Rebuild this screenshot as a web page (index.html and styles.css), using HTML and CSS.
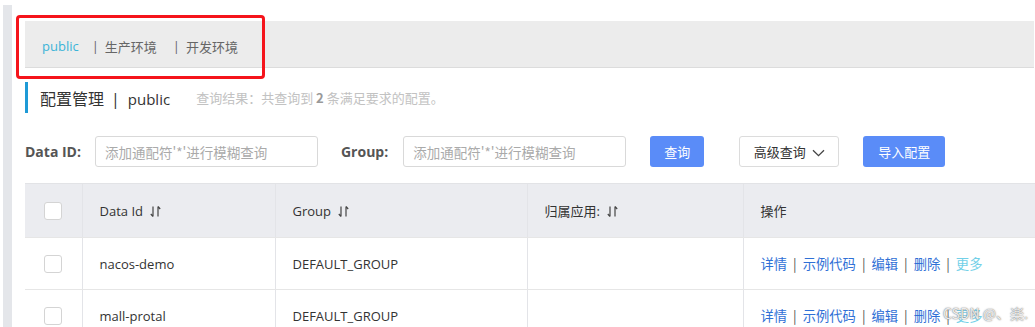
FILE: index.html
```html
<!DOCTYPE html>
<html lang="zh-CN">
<head>
    <meta charset="UTF-8">
    <title>配置管理</title>
    <link rel="stylesheet" href="styles.css">
</head>
<body>
    <div class="page">
        <div class="side-strip"></div>

        <div class="main">
            <!-- 命名空间切换 -->
            <div class="ns-bar">
                <span class="ns-item active">public</span>
                <span class="ns-sep">|</span>
                <span class="ns-item">生产环境</span>
                <span class="ns-sep">|</span>
                <span class="ns-item">开发环境</span>
            </div>
            <div class="mark-box"></div>

            <!-- 标题 -->
            <div class="page-title">
                <span class="title-text">配置管理<span class="title-sep">|</span><span class="title-ns">public</span></span>
                <span class="title-tip">查询结果：共查询到 <b>2</b> 条满足要求的配置。</span>
            </div>

            <!-- 查询条件 -->
            <div class="search-row">
                <label class="search-label">Data ID:</label>
                <input class="search-input" type="text" placeholder="添加通配符'*'进行模糊查询">
                <label class="search-label group-label">Group:</label>
                <input class="search-input" type="text" placeholder="添加通配符'*'进行模糊查询">
                <button class="btn btn-primary btn-query">查询</button>
                <button class="btn btn-normal">高级查询
                    <svg class="chevron" width="13" height="8" viewBox="0 0 13 8"><path d="M1 1.2 L6.5 6.6 L12 1.2" fill="none" stroke="#444" stroke-width="1.3"/></svg>
                </button>
                <button class="btn btn-primary btn-import">导入配置</button>
            </div>

            <!-- 配置列表 -->
            <table class="config-table">
                <colgroup>
                    <col style="width: 57px">
                    <col style="width: 193px">
                    <col style="width: 252px">
                    <col style="width: 216px">
                    <col>
                </colgroup>
                <thead>
                    <tr>
                        <th><span class="checkbox"></span></th>
                        <th>Data Id <svg class="sort" width="11" height="13" viewBox="0 0 11 13"><path d="M3 1.5 V11.5 M0.8 9 L3 11.5 M8 1.5 V11.5 M8 1.5 L10.2 4" fill="none" stroke="#444" stroke-width="1.2"/></svg></th>
                        <th>Group <svg class="sort" width="11" height="13" viewBox="0 0 11 13"><path d="M3 1.5 V11.5 M0.8 9 L3 11.5 M8 1.5 V11.5 M8 1.5 L10.2 4" fill="none" stroke="#444" stroke-width="1.2"/></svg></th>
                        <th>归属应用: <svg class="sort" width="11" height="13" viewBox="0 0 11 13"><path d="M3 1.5 V11.5 M0.8 9 L3 11.5 M8 1.5 V11.5 M8 1.5 L10.2 4" fill="none" stroke="#444" stroke-width="1.2"/></svg></th>
                        <th>操作</th>
                    </tr>
                </thead>
                <tbody>
                    <tr>
                        <td><span class="checkbox"></span></td>
                        <td>nacos-demo</td>
                        <td>DEFAULT_GROUP</td>
                        <td></td>
                        <td class="ops">
                            <a>详情</a><span class="op-sep">|</span><a>示例代码</a><span class="op-sep">|</span><a>编辑</a><span class="op-sep">|</span><a>删除</a><span class="op-sep">|</span><a class="more">更多</a>
                        </td>
                    </tr>
                    <tr>
                        <td><span class="checkbox"></span></td>
                        <td>mall-protal</td>
                        <td>DEFAULT_GROUP</td>
                        <td></td>
                        <td class="ops">
                            <a>详情</a><span class="op-sep">|</span><a>示例代码</a><span class="op-sep">|</span><a>编辑</a><span class="op-sep">|</span><a>删除</a><span class="op-sep">|</span><a class="more">更多</a>
                        </td>
                    </tr>
                </tbody>
            </table>
        </div>

        <div class="watermark">CSDN @、楽.</div>
    </div>
</body>
</html>
```

FILE: styles.css
```css
body {
    margin: 0;
    padding: 0;
    background: #fff;
    color: #333;
    font-family: "Open Sans", "Noto Sans CJK SC", sans-serif;
    font-size: 13px;
    overflow: hidden;
}

.page {
    position: relative;
    display: flex;
    height: 327px;
    overflow: hidden;
}

/* 左侧灰条 */
.side-strip {
    width: 9px;
    margin-left: 3px;
    margin-top: 5px;
    background: #e4e6ea;
    flex-shrink: 0;
}

.main {
    position: relative;
    flex: 1;
    padding: 21px 0 0 13px;
}

/* 命名空间 */
.ns-bar {
    box-sizing: border-box;
    height: 47px;
    background: #ececec;
    border-bottom: 1px solid #dcdcdc;
    display: flex;
    align-items: center;
    padding: 4px 0 0 17px;
    color: #666;
    margin-right: 1px;
}

.ns-item {
    font-size: 13px;
}

.ns-item.active {
    color: #3bb4d8;
}

.ns-sep {
    color: #666;
    margin: 0 6px 0 13px;
}

.ns-sep + .ns-item + .ns-sep {
    margin-left: 16px;
}

/* 红色标注框 */
.mark-box {
    position: absolute;
    left: 4px;
    top: 15px;
    width: 243px;
    height: 58px;
    border: 3px solid #f5141b;
    border-radius: 4px;
}

/* 标题 */
.page-title {
    margin-top: 14px;
    height: 31px;
    border-left: 3px solid #1e9ad6;
    padding-left: 12px;
    display: flex;
    align-items: center;
}

.title-text {
    font-size: 16px;
    color: #333;
}

.title-sep {
    margin: 0 8px 0 7px;
}

.title-ns {
    font-size: 15px;
}

.title-tip {
    margin-left: 26px;
    font-family: "Noto Sans CJK SC", sans-serif;
    font-size: 13px;
    color: #c2c2c2;
}

.title-tip b {
    color: #999;
}

/* 查询 */
.search-row {
    margin-top: 23px;
    display: flex;
    align-items: center;
    height: 31px;
}

.search-label {
    font-weight: bold;
    color: #555;
    font-size: 14px;
    margin-right: 14px;
}

.group-label {
    margin-left: 23px;
    margin-right: 15px;
}

.search-input {
    width: 223px;
    height: 31px;
    box-sizing: border-box;
    border: 1px solid #d9d9d9;
    border-radius: 3px;
    padding: 0 9px;
    font-family: "Noto Sans CJK SC", sans-serif;
    font-size: 13.5px;
    outline: none;
}

.search-input::placeholder {
    color: #aaa;
}

.btn {
    height: 31px;
    box-sizing: border-box;
    border-radius: 3px;
    font-family: "Noto Sans CJK SC", sans-serif;
    font-size: 13px;
    cursor: pointer;
    padding: 0;
}

.btn-primary {
    background: #5a8cf8;
    border: none;
    color: #fff;
}

.btn-query {
    width: 54px;
    margin-left: 24px;
}

.btn-normal {
    width: 100px;
    margin-left: 35px;
    background: #fff;
    border: 1px solid #dcdcdc;
    color: #333;
    display: flex;
    align-items: center;
    justify-content: center;
    gap: 6px;
}

.chevron {
    margin-top: 2px;
}

.btn-import {
    width: 82px;
    margin-left: 24px;
}

/* 表格 */
.config-table {
    margin-top: 16px;
    width: 1010px;
    border-collapse: collapse;
    table-layout: fixed;
}

.config-table th,
.config-table td {
    text-align: left;
    padding: 0 0 0 17px;
    border-left: 1px solid #e3e4e8;
    border-bottom: 1px solid #e6e6e6;
    white-space: nowrap;
}

.config-table th:first-child,
.config-table td:first-child {
    border-left: none;
    padding-left: 19px;
}

.config-table th {
    height: 53px;
    background: #ebecf0;
    font-weight: normal;
    color: #333;
    border-top: 1px solid #e2e3e6;
}

.config-table td {
    height: 51px;
    color: #333;
}

.sort {
    vertical-align: -2px;
    margin-left: 4px;
}

.checkbox {
    display: inline-block;
    width: 16px;
    height: 16px;
    border: 1px solid #d4d4d4;
    border-radius: 3px;
    background: #fff;
    vertical-align: middle;
}

.ops {
    font-family: "Noto Sans CJK SC", sans-serif;
    font-size: 13.3px;
}

.ops a {
    color: #2f70d6;
}

.ops a.more {
    color: #72d0e8;
}

.op-sep {
    color: #555;
    margin: 0 6px;
}

/* 水印 */
.watermark {
    position: absolute;
    left: 943px;
    top: 303px;
    font-family: "Noto Sans CJK SC", sans-serif;
    font-size: 14px;
    color: rgba(255, 255, 255, 0.85);
    text-shadow: 0 0 1px #777, 0 0 2px #999;
}
```
